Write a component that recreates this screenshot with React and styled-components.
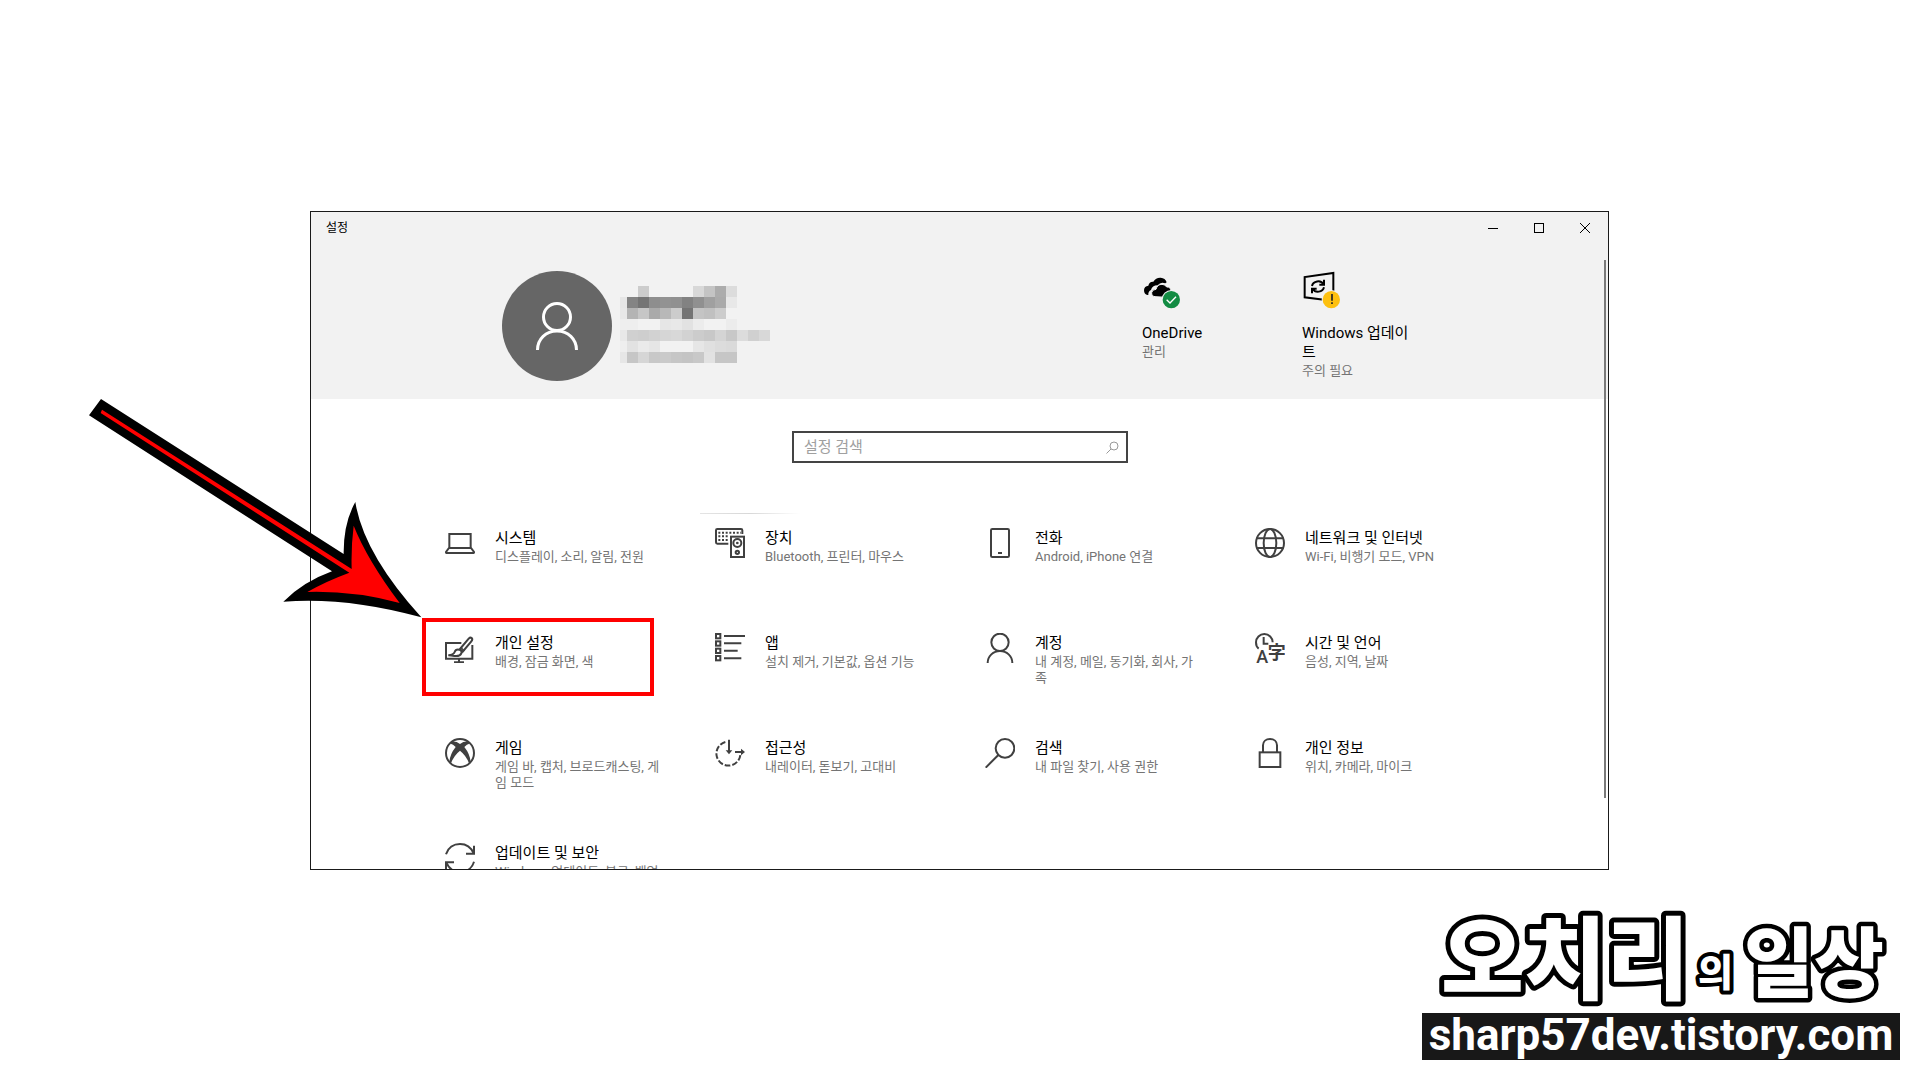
import React from 'react';
import styled, { createGlobalStyle, css } from 'styled-components';

const GlobalStyle = createGlobalStyle`
    * {
        box-sizing: border-box;
    }
    body {
        margin: 0;
        background: #fff;
        color: #000;
        font-family: Roboto, "Noto Sans CJK KR", sans-serif;
    }
    button, input {
        font-family: inherit;
    }
`
const Page = styled.div`
    position: relative;
    display: flex;
    flex-direction: column;
    height: 100vh;
    min-height: 800px;
    padding-top: 211px;
    overflow: hidden;
`
const Window = styled.main`
    position: relative;
    flex: 1;
    min-height: 0;
    margin: 0 311px 0 310px;
    border: 1px solid #1a1a1a;
    background: #fff;
    overflow: hidden;
`
const Header = styled.header`
    height: 187px;
    background: #f2f2f2;
`
const TitleBar = styled.div`
    display: flex;
    align-items: center;
    justify-content: space-between;
    height: 32px;
    padding-left: 15px;
`
const WindowTitle = styled.h1`
    margin: 0;
    font-size: 12px;
    font-weight: 400;
    line-height: 16px;
`
const WindowButtons = styled.div`
    display: flex;
`
const WindowButton = styled.button`
    display: flex;
    align-items: center;
    justify-content: center;
    width: 46px;
    height: 32px;
    padding: 0;
    border: 0;
    background: none;
`
const AccountRow = styled.div`
    display: flex;
    justify-content: space-between;
    max-width: 915px;
    margin: 0 auto;
    padding: 27px 7px 0 0;
`
const Profile = styled.div`
    display: flex;
    align-items: center;
    gap: 8px;
`
const Avatar = styled.div`
    width: 110px;
    height: 110px;
    border-radius: 50%;
    background: #666;
`
const StatusList = styled.div`
    display: flex;
    gap: 52px;
`
const StatusLink = styled.a`
    display: block;
    width: 108px;
    color: inherit;
    text-decoration: none;
    word-break: break-all;
    svg {
        display: block;
        margin-bottom: 12px;
    }
`
const Title = styled.div`
    padding-top: 1px;
    font-size: 15px;
    line-height: 19px;
`
const Description = styled.div`
    margin-top: 1px;
    color: #747474;
    font-size: 13px;
    line-height: 16px;
`
const Content = styled.div`
    padding: 32px 0 0 1px;
`
const SearchBox = styled.label`
    display: flex;
    align-items: center;
    width: 336px;
    height: 32px;
    margin: 0 auto 50px;
    padding: 0 7px 0 10px;
    border: 2px solid #444;
`
const SearchInput = styled.input`
    flex: 1;
    min-width: 0;
    padding: 0;
    border: 0;
    outline: 0;
    background: none;
    font-size: 15px;
    &::placeholder {
        color: #a0a0a0;
        opacity: 1;
    }
`
const Grid = styled.nav`
    display: grid;
    grid-template-columns: repeat(4, 250px);
    grid-auto-rows: 85px;
    justify-content: center;
    gap: 20px;
`
const Tile = styled.a`
    position: relative;
    display: flex;
    gap: 20px;
    padding: 15px 18px 0 15px;
    color: inherit;
    text-decoration: none;
    word-break: break-all;
    > svg {
        flex: none;
    }
    ${props => props.$lit && css`
        &::before {
            content: '';
            position: absolute;
            top: 0;
            left: 0;
            width: 100px;
            height: 1px;
            background: linear-gradient(to right, #e4e4e4, #d8d8d8 50%, #fff);
        }
    `}
`
const RedFrame = styled.span`
    position: absolute;
    top: 0;
    left: -8px;
    width: 232px;
    height: 78px;
    border: 4px solid #f00;
`
const ScrollThumb = styled.div`
    position: absolute;
    top: 48px;
    right: 2px;
    width: 2px;
    height: 538px;
    background: #7a7a7a;
`
const Arrow = styled.svg`
    position: absolute;
    top: 380px;
    left: 80px;
`
const Watermark = styled.footer`
    align-self: flex-end;
    width: 478px;
    margin: 33px 20px 20px 0;
`
const BlogName = styled.svg`
    display: block;
    overflow: visible;
    fill: #fff;
    stroke: #000;
    stroke-linejoin: round;
    paint-order: stroke fill;
    font-family: "Noto Sans CJK KR", sans-serif;
    font-weight: 900;
`
const BlogAddress = styled.div`
    height: 47px;
    background: #181818;
    color: #fff;
    font-size: 44px;
    font-weight: 700;
    line-height: 44px;
    text-align: center;
`

// 30px line icons on a 90 unit grid
const Icon = ({ children }) => (
    <svg width="30" height="30" viewBox="0 0 90 90" fill="none" stroke="#404040" strokeWidth="6" aria-hidden="true">
        {children}
    </svg>
)

const icons = {
    system: (
        <Icon>
            <path d="M13 58V18H77V58" />
            <path d="M12 60H78L87 72Q88 75 84 75H6Q2 75 3 72Z" />
        </Icon>
    ),
    devices: (
        <Icon>
            <path d="M40 47H7Q3 47 3 43V7Q3 3 7 3H78Q82 3 82 7V18" />
            <path d="M10 14H78" strokeDasharray="6 5" />
            <path d="M10 25H40M10 36H40" strokeDasharray="6 5" />
            <rect x="48" y="26" width="39" height="61" />
            <circle cx="67" cy="45" r="12" />
            <circle cx="67" cy="45" r="4" fill="#404040" stroke="none" />
            <circle cx="67" cy="73" r="5" />
        </Icon>
    ),
    phone: (
        <Icon>
            <rect x="18" y="3" width="54" height="84" rx="4" />
            <path d="M39 75H51" />
        </Icon>
    ),
    network: (
        <Icon>
            <circle cx="45" cy="45" r="42" />
            <ellipse cx="45" cy="45" rx="19" ry="42" />
            <path d="M5 31H85M5 60H85" />
        </Icon>
    ),
    personalization: (
        <Icon>
            <path d="M49 30H3V77H82V36" />
            <path d="M42 77V88M27 88H57" />
            <path d="M45 48L71 17Q76 12 80 15Q84 19 79 25L53 56Z" />
            <path d="M10 67Q26 66 29 57Q32 48 42 50Q52 53 49 61Q45 71 28 69Q18 68 10 67Z" />
            <path d="M47 43L58 54" strokeWidth="4" />
        </Icon>
    ),
    apps: (
        <Icon>
            {[3, 25, 47, 69].map(y => <rect key={y} x="3" y={y} width="13" height="13" />)}
            <path d="M27 9H90M27 31H79M27 53H68M27 76H79" />
        </Icon>
    ),
    accounts: (
        <Icon>
            <circle cx="45" cy="28" r="26" />
            <path d="M8 90C8 69 25 54 45 54S82 69 82 90" />
        </Icon>
    ),
    time: (
        <Icon>
            <path d="M11 47C4 42 3 35 3 28A25 25 0 0 1 53 28" />
            <path d="M26 12V32H40" />
            <g fill="#404040" stroke="none">
                <text x="4" y="90" fontFamily="Roboto" fontSize="54" fontWeight="500">A</text>
                <text x="38" y="79" fontFamily="Noto Sans CJK JP" fontSize="54" fontWeight="700">字</text>
            </g>
        </Icon>
    ),
    gaming: (
        <Icon>
            <circle cx="45" cy="45" r="42" />
            <path d="M21 11Q33 9 45 18Q57 9 69 11L73 17Q66 18 58 27Q75 48 77 72L72 76Q64 53 45 38Q26 53 18 76L13 72Q15 48 32 27Q24 18 17 17Z" fill="#404040" stroke="none" />
        </Icon>
    ),
    access: (
        <Icon>
            <path d="M31 12A36 36 0 1 0 76 51" strokeDasharray="17 6" />
            <path d="M42 5V42M60 42H84" />
            <path d="M32 37H52L42 49ZM78 32V52L90 42Z" fill="#404040" stroke="none" />
        </Icon>
    ),
    search: (
        <Icon>
            <circle cx="60" cy="31" r="28" />
            <path d="M40 51L2 89" />
        </Icon>
    ),
    privacy: (
        <Icon>
            <rect x="14" y="43" width="62" height="44" />
            <path d="M24 43V22C24 10 33 3 45 3S66 10 66 22V43" />
        </Icon>
    ),
    update: (
        <Icon>
            <path d="M3 34C9 14 26 3 45 3C63 3 78 13 86 31" />
            <path d="M87 8V32H63" />
            <path d="M87 56C81 76 64 87 45 87C27 87 12 77 4 59" />
            <path d="M3 82V58H27" />
        </Icon>
    )
}

const tiles = [
    { id: 'system', title: '시스템', text: '디스플레이, 소리, 알림, 전원' },
    { id: 'devices', title: '장치', text: 'Bluetooth, 프린터, 마우스', lit: true },
    { id: 'phone', title: '전화', text: 'Android, iPhone 연결' },
    { id: 'network', title: '네트워크 및 인터넷', text: 'Wi-Fi, 비행기 모드, VPN' },
    { id: 'personalization', title: '개인 설정', text: '배경, 잠금 화면, 색', framed: true },
    { id: 'apps', title: '앱', text: '설치 제거, 기본값, 옵션 기능' },
    { id: 'accounts', title: '계정', text: '내 계정, 메일, 동기화, 회사, 가족' },
    { id: 'time', title: '시간 및 언어', text: '음성, 지역, 날짜' },
    { id: 'gaming', title: '게임', text: '게임 바, 캡처, 브로드캐스팅, 게임 모드' },
    { id: 'access', title: '접근성', text: '내레이터, 돋보기, 고대비' },
    { id: 'search', title: '검색', text: '내 파일 찾기, 사용 권한' },
    { id: 'privacy', title: '개인 정보', text: '위치, 카메라, 마이크' },
    { id: 'update', title: '업데이트 및 보안', text: 'Windows 업데이트, 복구, 백업' }
]

// gray levels of the pixelated account name, the first column is narrower
const mosaic = [
    ['', '', 'cc', '', '', '', '', 'd8', 'c4', 'ac', 'dc', '', '', ''],
    ['e6', '84', '74', '8e', '92', '90', '82', '90', 'a0', 'aa', 'e8', '', '', ''],
    ['e8', 'b4', 'c6', 'aa', 'b8', 'cc', '74', 'c4', 'c0', 'cc', '', '', '', ''],
    ['ee', 'ee', '', '', 'e6', 'e8', 'e2', 'ec', '', '', 'ec', '', '', ''],
    ['e8', 'd0', 'ce', 'd2', 'd6', 'd8', 'd2', 'cc', 'c8', 'd4', 'c8', 'dc', 'd0', 'd8'],
    ['ee', 'e2', 'ea', 'e6', '', '', '', 'e6', 'e0', 'dc', 'da', '', '', ''],
    ['e6', 'c6', 'd6', 'c8', 'ca', 'c6', 'c4', 'c8', 'e2', 'c6', 'c6', '', '', '']
]

const Mosaic = () => (
    <svg width="150" height="80" shapeRendering="crispEdges" aria-hidden="true">
        {mosaic.map((row, y) => row.map((level, x) => level && (
            <rect
                key={`${x}-${y}`}
                x={x === 0 ? 0 : x * 11 - 4}
                y={y * 11}
                width={x === 0 ? 7 : 11}
                height="11"
                fill={`#${level}${level}${level}`}
            />
        )))}
    </svg>
)

const OneDriveIcon = () => (
    <svg width="40" height="40" viewBox="0 0 120 120" aria-hidden="true">
        <path d="M17 72Q6 70 6 57Q7 45 19 44Q22 31 34 32Q42 19 56 20Q70 21 74 34L70 37Q56 31 47 43Q30 43 27 57Q18 61 19 72Z" />
        <path d="M39 77Q28 75 29 65Q31 55 42 55Q46 40 60 40Q69 40 74 48Q86 47 87 60L94 80Z" stroke="#f2f2f2" strokeWidth="3" />
        <circle cx="88" cy="86" r="29" fill="#f2f2f2" />
        <circle cx="88" cy="86" r="26" fill="#138c43" />
        <path d="M74 86L84 96L102 77" fill="none" stroke="#fff" strokeWidth="4" />
    </svg>
)

const UpdateIcon = () => (
    <svg width="40" height="40" viewBox="0 0 120 120" aria-hidden="true">
        <g fill="none" stroke="#000" strokeWidth="6">
            <path d="M94 60V6L8 18V79L66 86" />
            <path d="M30 45C33 30 56 25 65 40M66 26V41H52M66 49C62 64 40 67 32 53M30 67V53H44" />
        </g>
        <circle cx="88" cy="86" r="29" fill="#f2f2f2" />
        <circle cx="88" cy="86" r="26" fill="#fdc010" />
        <path d="M90 69V89M90 94V99" stroke="#222" strokeWidth="5" />
    </svg>
)

const App = () => {
    return (
        <Page>
            <GlobalStyle />
            <Window>
                <Header>
                    <TitleBar>
                        <WindowTitle>설정</WindowTitle>
                        <WindowButtons>
                            <WindowButton aria-label="최소화">
                                <svg width="10" height="10" stroke="#000"><path d="M0 5.5H10" /></svg>
                            </WindowButton>
                            <WindowButton aria-label="최대화">
                                <svg width="10" height="10" stroke="#000" fill="none"><rect x="0.5" y="0.5" width="9" height="9" /></svg>
                            </WindowButton>
                            <WindowButton aria-label="닫기">
                                <svg width="10" height="10" stroke="#000"><path d="M0 0L10 10M10 0L0 10" /></svg>
                            </WindowButton>
                        </WindowButtons>
                    </TitleBar>
                    <AccountRow>
                        <Profile>
                            <Avatar>
                                <svg width="110" height="110" fill="none" stroke="#fff" strokeWidth="3" aria-hidden="true">
                                    <circle cx="55" cy="46" r="13.5" />
                                    <path d="M35.5 79C35.5 68 44 60 55 60S74.500 68 74.500 79" />
                                </svg>
                            </Avatar>
                            <Mosaic />
                        </Profile>
                        <StatusList>
                            <StatusLink href="#onedrive">
                                <OneDriveIcon />
                                <Title>OneDrive</Title>
                                <Description>관리</Description>
                            </StatusLink>
                            <StatusLink href="#windows-update">
                                <UpdateIcon />
                                <Title>Windows 업데이트</Title>
                                <Description>주의 필요</Description>
                            </StatusLink>
                        </StatusList>
                    </AccountRow>
                </Header>
                <Content>
                    <SearchBox>
                        <SearchInput type="text" placeholder="설정 검색" aria-label="설정 검색" />
                        <svg width="13" height="13" fill="none" stroke="#999" aria-hidden="true">
                            <circle cx="8" cy="5" r="4" />
                            <path d="M5 8L0.500 12.500" />
                        </svg>
                    </SearchBox>
                    <Grid>
                        {tiles.map(tile => (
                            <Tile key={tile.id} href={`#${tile.id}`} $lit={tile.lit}>
                                {icons[tile.id]}
                                <div>
                                    <Title>{tile.title}</Title>
                                    <Description>{tile.text}</Description>
                                </div>
                                {tile.framed && <RedFrame />}
                            </Tile>
                        ))}
                    </Grid>
                </Content>
                <ScrollThumb />
            </Window>
            <Watermark>
                <BlogName width="478" height="110">
                    <text x="19" y="89" fontSize="90" strokeWidth="10">오치리</text>
                    <text x="276" y="83" fontSize="38" strokeWidth="8">의</text>
                    <text x="322" y="88" fontSize="76" strokeWidth="9">일상</text>
                </BlogName>
                <BlogAddress>sharp57dev.tistory.com</BlogAddress>
            </Watermark>
            <Arrow width="360" height="250" viewBox="0 0 1080 750" aria-hidden="true">
                <path d="M63 57L791 522Q790 430 826 366Q850 520 1024 712Q800 650 610 665Q670 605 756 574L27 106Z" />
                <path d="M66 89L815 567Q813 500 821 437Q862 540 959 669Q820 632 682 636Q735 605 808 578L62 99Z" fill="#f00" />
            </Arrow>
        </Page>
    )
}

export default App;
